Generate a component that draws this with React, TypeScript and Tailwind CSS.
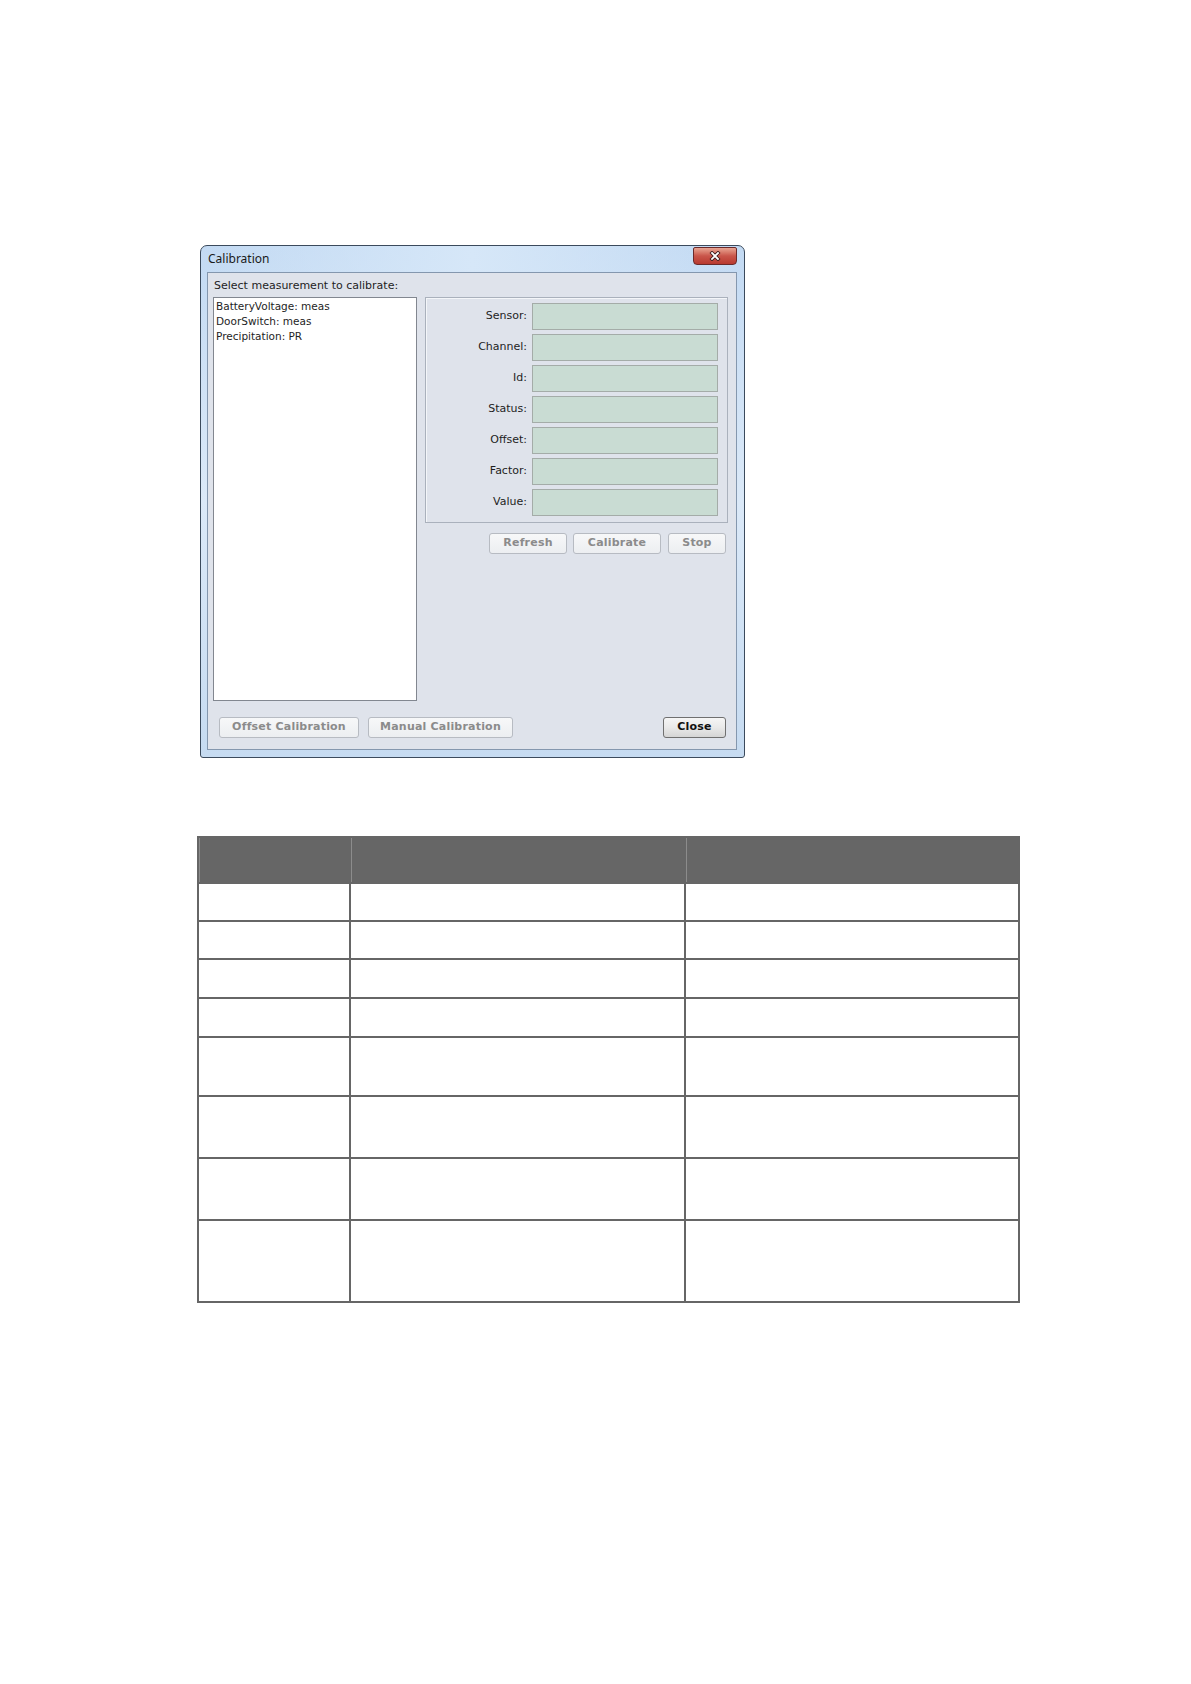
const dejavu = "font-['DejaVu_Sans',sans-serif]";

const fields = ["Sensor:", "Channel:", "Id:", "Status:", "Offset:", "Factor:", "Value:"];
const items = ["BatteryVoltage: meas", "DoorSwitch: meas", "Precipitation: PR"];

// row heights measured off the reference table
const rowHeights = [38, 38, 39, 39, 59, 62, 62, 82];

function WinButton({
  label,
  width,
  enabled = false,
}: {
  label: string;
  width: number;
  enabled?: boolean;
}) {
  return (
    <button
      className={`${dejavu} flex h-[21px] items-center justify-center rounded-[3px] border text-[11px] font-bold tracking-[0.2px] ${
        enabled
          ? "border-[#707070] bg-gradient-to-b from-[#f6f6f6] via-[#e9e9e9] to-[#d5d5d5] text-[#111]"
          : "border-[#b7bbc2] bg-gradient-to-b from-[#f7f8f9] to-[#eceef1] text-[#8b8b8b]"
      }`}
      style={{ width }}
    >
      {label}
    </button>
  );
}

function CloseX() {
  return (
    <div className="mt-[1px] flex h-[18px] w-[44px] items-center justify-center rounded-b-[4px] rounded-t-[2px] border border-[#6b2a2a] bg-gradient-to-b from-[#e8a593] via-[#c9554a] to-[#b8392f]">
      <svg width="12" height="10" viewBox="0 0 12 10">
        <path d="M3 2 L9 8 M9 2 L3 8" stroke="#3d1b1b" strokeWidth="3.5" strokeLinecap="square" />
        <path d="M3 2 L9 8 M9 2 L3 8" stroke="#ffffff" strokeWidth="1.8" strokeLinecap="square" />
      </svg>
    </div>
  );
}

function CalibrationDialog() {
  return (
    <div className="flex h-[513px] w-[545px] flex-col rounded-b-[3px] rounded-t-[7px] border border-[#3b4a5c] bg-gradient-to-b from-[#c3daf3] via-[#dbe9f8] to-[#c6dbf1] pb-[7px] pl-[6px] pr-[7px]">
      {/* title bar */}
      <div className="flex h-[26px] items-start justify-between bg-gradient-to-r from-transparent via-[#d6e7f8] to-transparent">
        <span className="mt-[6px] pl-[1px] font-['Noto_Sans',sans-serif] text-[12px] leading-[14px] text-[#1a1a1a]">
          Calibration
        </span>
        <CloseX />
      </div>

      {/* content */}
      <div className={`${dejavu} flex flex-1 flex-col border border-[#8497ae] bg-[#dfe3eb] text-[#1e1e1e]`}>
        <div className="mt-[2px] flex h-[22px] items-center pl-[6px] text-[11px]">
          Select measurement to calibrate:
        </div>

        <div className="flex h-[404px]">
          <div className="ml-[5px] w-[204px] border border-[#828790] bg-white pl-[2px] pt-[1px] text-[10.5px] leading-[15px]">
            {items.map((t) => (
              <div key={t}>{t}</div>
            ))}
          </div>

          <div className="ml-[8px] flex w-[303px] flex-col">
            <div className="flex h-[226px] flex-col gap-[4px] border border-[#aab1bc] pr-[9px] pt-[5px] shadow-[inset_1px_1px_0_#f4f6f9]">
              {fields.map((f) => (
                <div key={f} className="flex h-[27px] items-center justify-end gap-[5px]">
                  <span className="text-[11px]">{f}</span>
                  <div className="h-[27px] w-[186px] border border-[#a4aca8] bg-[#c9dcd3]" />
                </div>
              ))}
            </div>
            <div className="mt-[10px] flex justify-end pr-[2px]">
              <WinButton label="Refresh" width={78} />
              <div className="ml-[6px]">
                <WinButton label="Calibrate" width={88} />
              </div>
              <div className="ml-[7px]">
                <WinButton label="Stop" width={58} />
              </div>
            </div>
          </div>
        </div>

        <div className="mt-[16px] flex h-[21px] items-center">
          <div className="ml-[11px]">
            <WinButton label="Offset Calibration" width={140} />
          </div>
          <div className="ml-[9px]">
            <WinButton label="Manual Calibration" width={145} />
          </div>
          <div className="ml-auto mr-[10px]">
            <WinButton label="Close" width={63} enabled />
          </div>
        </div>
      </div>
    </div>
  );
}

function EmptyTable() {
  return (
    <table className="w-[821px] table-fixed border-collapse border-2 border-[#666]">
      <colgroup>
        <col className="w-[152px]" />
        <col className="w-[335px]" />
        <col className="w-[334px]" />
      </colgroup>
      <thead>
        <tr className="h-[46px] bg-[#666]">
          <th className="border-2 border-[#666] shadow-[inset_1px_0_0_#8c8c8c]" />
          <th className="border-2 border-[#666] shadow-[inset_1px_0_0_#8c8c8c]" />
          <th className="border-2 border-[#666] shadow-[inset_1px_0_0_#8c8c8c]" />
        </tr>
      </thead>
      <tbody>
        {rowHeights.map((h, i) => (
          <tr key={i} style={{ height: h }}>
            <td className="border-2 border-[#666]" />
            <td className="border-2 border-[#666]" />
            <td className="border-2 border-[#666]" />
          </tr>
        ))}
      </tbody>
    </table>
  );
}

export default function App() {
  return (
    <div className="min-h-[1684px] w-[1191px] bg-white pt-[245px]">
      <div className="ml-[200px]">
        <CalibrationDialog />
      </div>
      <div className="ml-[197px] mt-[78px]">
        <EmptyTable />
      </div>
    </div>
  );
}
